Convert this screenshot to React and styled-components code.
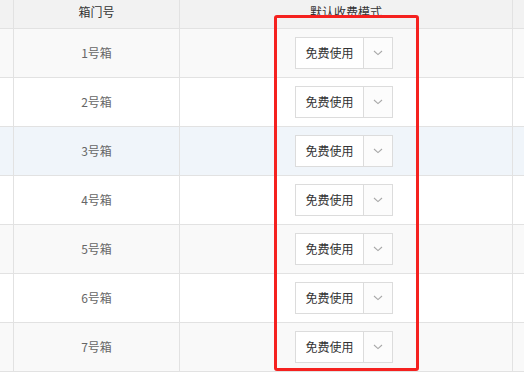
import React from "react";
import styled, { createGlobalStyle } from "styled-components";

const Global = createGlobalStyle`
  html, body { margin: 0; padding: 0; background: #fff; }
  body { font-family: "Noto Sans CJK SC", "Noto Sans", sans-serif; font-size: 12px; }
`;

const Page = styled.div`
  position: relative;
  width: 524px;
  height: 373px;
  overflow: hidden;
`;

const Table = styled.div`
  display: flex;
  flex-direction: column;
  width: 524px;
`;

const Row = styled.div`
  display: grid;
  grid-template-columns: 14px 166px 333px 1fr;
  height: ${(p) => (p.$header ? 29 : 49)}px;
  box-sizing: border-box;
  border-bottom: 1px solid #e2e2e2;
  background: ${(p) => p.$bg};
`;

const Cell = styled.div`
  box-sizing: border-box;
  border-right: ${(p) => (p.$last ? "none" : "1px solid #e2e2e2")};
  display: flex;
  justify-content: center;
  align-items: ${(p) => (p.$header ? "flex-start" : "center")};
  padding-top: ${(p) => (p.$header ? "4px" : "0")};
  line-height: 16px;
  color: ${(p) => (p.$header ? "#333" : "#666")};
  font-size: 12px;
  white-space: nowrap;
`;

const Select = styled.div`
  display: flex;
  width: 98px;
  height: 32px;
  box-sizing: border-box;
  border: 1px solid #dcdcdc;
  background: #fff;
  margin-left: -4px;
`;

const SelectText = styled.div`
  width: 67px;
  display: flex;
  align-items: center;
  justify-content: center;
  color: #333;
  font-size: 12px;
  border-right: 1px solid #dcdcdc;
`;

const SelectArrow = styled.div`
  flex: 1;
  display: flex;
  align-items: center;
  justify-content: center;
  background: #fcfcfc;
`;

const Highlight = styled.div`
  position: absolute;
  left: 274px;
  top: 15px;
  width: 145px;
  height: 356px;
  box-sizing: border-box;
  border: 3px solid #f5211f;
  border-radius: 3px;
  pointer-events: none;
`;

const Chevron = () => (
  <svg width="10" height="6" viewBox="0 0 10 6">
    <path d="M1 1 L5 4.6 L9 1" fill="none" stroke="#a8a8a8" strokeWidth="1.1" />
  </svg>
);

const rows = [
  { name: "1号箱", bg: "#f9f9f9" },
  { name: "2号箱", bg: "#ffffff" },
  { name: "3号箱", bg: "#f0f5fa" },
  { name: "4号箱", bg: "#ffffff" },
  { name: "5号箱", bg: "#f9f9f9" },
  { name: "6号箱", bg: "#ffffff" },
  { name: "7号箱", bg: "#f9f9f9" },
];

export default function App() {
  return (
    <>
      <Global />
      <Page>
        <Table>
          <Row $header $bg="#f2f2f2">
            <Cell $header />
            <Cell $header>箱门号</Cell>
            <Cell $header>默认收费模式</Cell>
            <Cell $header $last />
          </Row>
          {rows.map((r) => (
            <Row key={r.name} $bg={r.bg}>
              <Cell />
              <Cell>{r.name}</Cell>
              <Cell>
                <Select>
                  <SelectText>免费使用</SelectText>
                  <SelectArrow>
                    <Chevron />
                  </SelectArrow>
                </Select>
              </Cell>
              <Cell $last />
            </Row>
          ))}
        </Table>
        <Highlight />
      </Page>
    </>
  );
}
